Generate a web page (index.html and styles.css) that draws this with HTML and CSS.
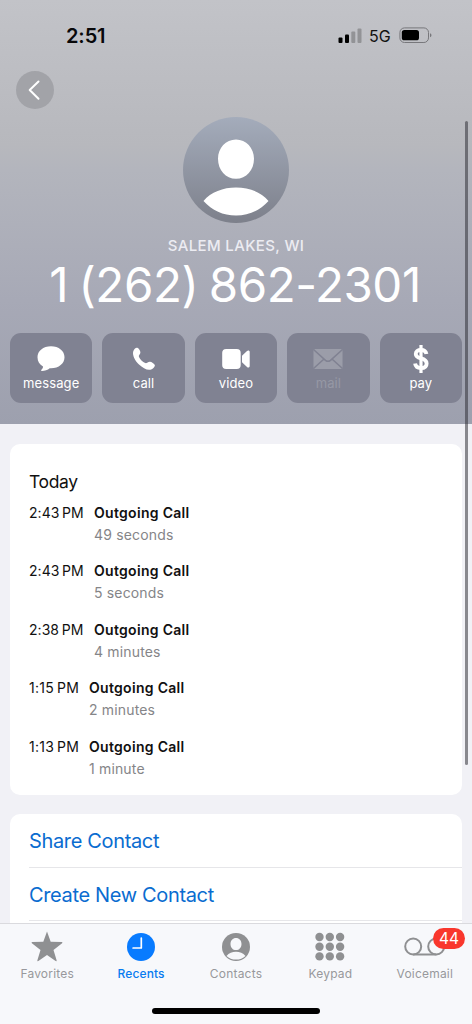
FILE: index.html
```html
<!DOCTYPE html>
<html lang="en">
<head>
<meta charset="utf-8">
<title>Recents</title>
<link rel="stylesheet" href="styles.css">
</head>
<body>
<div class="phone">
  <header class="hero">
    <div class="status">
      <span class="clock">2:51</span>
      <div class="indicators">
        <svg class="signal" width="24" height="16" viewBox="0 0 24 16"><rect x="0.5" y="9.5" width="4" height="5.5" rx="1"/><rect x="7" y="6.5" width="4" height="8.500" rx="1"/><g opacity=".23"><rect x="13.300" y="3.500" width="4" height="11.500" rx="1"/><rect x="19.500" y="0.500" width="4" height="14.500" rx="1"/></g></svg>
        <span class="network">5G</span>
        <svg class="battery" width="34" height="17" viewBox="0 0 34 17"><rect x=".9" y=".9" width="28.600" height="14.600" rx="4.600" fill="none" stroke="#77777b" stroke-width="1"/><rect x="2.800" y="2.900" width="17.200" height="10.400" rx="2.600"/><path d="M31 6.200c2 .8 2 3.300 0 4z" fill="#77777b"/></svg>
      </div>
    </div>
    <button class="back" aria-label="Back"><svg width="38" height="38" viewBox="0 0 38 38"><path d="M22.500 10.500 13.700 19l8.800 8.700" fill="none" stroke="#fff" stroke-width="2" stroke-linecap="round" stroke-linejoin="round"/></svg></button>
    <svg class="avatar" width="106" height="106" viewBox="0 0 106 106">
      <defs><linearGradient id="face" x2="0" y2="1"><stop stop-color="#a4acbb"/><stop offset="1" stop-color="#7d808b"/></linearGradient></defs>
      <circle cx="53" cy="53" r="53" fill="url(#face)"/>
      <path d="M53 22.500c10.200 0 18 8.500 18 19.200 0 11.300-7.700 20.100-18 20.100s-18-8.800-18-20.100c0-10.700 7.800-19.200 18-19.200zM20.500 84C28 75 40 70.500 53 70.500S78 75 85.500 84C77 93.500 66 98.500 53 98.500S29 93.500 20.500 84z" fill="#fff"/>
    </svg>
    <div class="place">SALEM LAKES, WI</div>
    <h1 class="number">1 (262) 862-2301</h1>
    <div class="actions">
      <button class="action"><svg width="32" height="28" viewBox="0 0 32 28"><path d="M16 1.200c7.800 0 13.500 4.700 13.500 11S23.800 23.200 16 23.200h-1.300c-2 1.700-5.500 2.900-7.900 2.800-.8 0-1-.7-.4-1.200 1-.8 1.700-2.100 1.600-3.300C4.600 19.500 2.500 16.300 2.500 12.200c0-6.300 5.700-11 13.500-11z"/></svg><span>message</span></button>
      <button class="action"><svg width="32" height="28" viewBox="0 0 32 28"><path d="M5.200 6.400C6.100 4 8.200 2.100 9.800 3.100c1.300.8 2.600 3.200 2.600 4.500 0 2-2.100 2.600-1.500 4.200.8 2.200 4 5.400 6.300 6.300 1.700.7 2.700-1.600 4.800-1.400 1.500.1 4.300 1.900 4.800 3.300.5 1.700-2 4.100-4.500 4.700-3.100.8-7.600-1.700-11.300-5.200C7 15.700 4.200 10 5.200 6.400z"/></svg><span>call</span></button>
      <button class="action"><svg width="32" height="28" viewBox="0 0 32 28"><rect x="2.200" y="4" width="18.500" height="20" rx="4"/><path d="m22 10.800 5-4.700c1.200-1 2.700-.5 2.700 1v13.800c0 1.500-1.500 2-2.700 1l-5-4.700z"/></svg><span>video</span></button>
      <button class="action off"><svg width="32" height="28" viewBox="0 0 32 28"><rect x="1.500" y="4" width="29" height="20" rx="1.500"/><path d="m1.500 4.500 12 10.800q2.500 2 5 0l12-10.800M1.500 23.500 12 14M30.500 23.500 20 14" fill="none" stroke="#808292" stroke-width="1.600"/></svg><span>mail</span></button>
      <button class="action"><svg width="32" height="28" viewBox="0 0 32 28"><path d="M21.400 9C20.900 6.300 19.100 5 16 5c-3.300 0-5.200 1.500-5.200 3.900 0 2.700 2 3.600 5.200 4.500 3.800 1 5.600 2.200 5.600 5 0 2.900-2.200 4.600-5.600 4.600-3.400 0-5.500-1.700-5.900-4.500" fill="none" stroke="#fff" stroke-width="3.900"/><path d="M16-.5v29" stroke="#fff" stroke-width="3.200"/></svg><span>pay</span></button>
    </div>
  </header>

  <main class="content">
    <section class="card log">
      <h2>Today</h2>
      <div class="call"><time>2:43&#8202;&#8202;PM</time><div class="detail"><b>Outgoing Call</b><span>49 seconds</span></div></div>
      <div class="call"><time>2:43&#8202;&#8202;PM</time><div class="detail"><b>Outgoing Call</b><span>5 seconds</span></div></div>
      <div class="call"><time>2:38&#8202;&#8202;PM</time><div class="detail"><b>Outgoing Call</b><span>4 minutes</span></div></div>
      <div class="call early"><time>1:15&#8202;&#8202;PM</time><div class="detail"><b>Outgoing Call</b><span>2 minutes</span></div></div>
      <div class="call early"><time>1:13&#8202;&#8202;PM</time><div class="detail"><b>Outgoing Call</b><span>1 minute</span></div></div>
    </section>
    <section class="card links">
      <a>Share Contact</a>
      <a>Create New Contact</a>
      <a></a>
    </section>
  </main>

  <nav class="tabs">
    <a class="tab"><svg width="40" height="32" viewBox="0 0 40 32"><path d="m20 1.500 3.700 10.200 11 .4c.7 0 .9.700.4 1.100l-8.600 6.900 3.100 10.100c.2.800-.4 1.200-1 .8L20 25l-8.600 6c-.6.400-1.200 0-1-.8l3.100-10.100-8.600-6.900c-.5-.4-.3-1.100.4-1.100l11-.4z"/></svg><span>Favorites</span></a>
    <a class="tab active"><svg width="40" height="32" viewBox="0 0 40 32"><circle cx="20" cy="17" r="14"/><path d="M20.300 8v10h-8.200" fill="none" stroke="#fff" stroke-width="1.700" stroke-linecap="round" stroke-linejoin="round"/></svg><span>Recents</span></a>
    <a class="tab"><svg width="40" height="32" viewBox="0 0 40 32"><circle cx="20" cy="17" r="14"/><path d="M20 8c3.200 0 5.500 2.600 5.500 5.900 0 3.400-2.300 6.200-5.500 6.200s-5.500-2.800-5.500-6.200C14.500 10.600 16.800 8 20 8zM10.500 26c2.400-3 5.800-4.200 9.500-4.200s7.100 1.200 9.500 4.200c-2.500 2.500-5.800 3.600-9.500 3.600S13 28.500 10.500 26z" fill="#f7f8fb"/></svg><span>Contacts</span></a>
    <a class="tab"><svg width="40" height="32" viewBox="0 0 40 32"><circle cx="9.500" cy="7" r="4.200"/><circle cx="19.800" cy="7" r="4.200"/><circle cx="30.100" cy="7" r="4.200"/><circle cx="9.500" cy="16.700" r="4.200"/><circle cx="19.800" cy="16.700" r="4.200"/><circle cx="30.100" cy="16.700" r="4.200"/><circle cx="9.500" cy="26.400" r="4.200"/><circle cx="19.800" cy="26.400" r="4.200"/><circle cx="30.100" cy="26.400" r="4.200"/></svg><span>Keypad</span></a>
    <a class="tab"><svg width="42" height="32" viewBox="0 0 42 32"><g fill="none" stroke="#8f9092" stroke-width="2"><circle cx="9.200" cy="16.500" r="8"/><circle cx="32.200" cy="16.500" r="8"/><path d="M9.200 24.500h23"/></g></svg><span>Voicemail</span><em class="badge">44</em></a>
  </nav>
  <div class="home"></div>
  <div class="scrollbar"></div>
</div>
</body>
</html>
```
FILE: styles.css
```css
* { box-sizing: border-box; }
body { margin: 0; font-family: Inter, "Liberation Sans", sans-serif; color: #111; }
button { border: 0; padding: 0; font: inherit; }
svg { display: block; flex: none; }
.phone { position: relative; width: 472px; height: 1024px; overflow: hidden; display: flex; flex-direction: column; background: #f1f1f6; }

.hero { flex: none; height: 424px; display: flex; flex-direction: column; align-items: center; background: linear-gradient(#c2c3c8 0, #b7b8bd 145px, #b3b5bd 170px, #a7a9b6 300px, #9da0ae 424px); }
.status { width: 100%; height: 71px; padding: 24px 39px 0 66px; display: flex; justify-content: space-between; align-items: flex-start; }
.clock { font-size: 20px; line-height: 24px; font-weight: 600; color: #08080a; letter-spacing: -.1px; }
.indicators { display: flex; align-items: center; height: 23px; }
.signal { margin-right: 7px; }
.network { font-size: 16px; width: 30px; color: #111; }
.back { align-self: flex-start; flex: none; width: 38px; height: 38px; margin-left: 16px; border-radius: 50%; background: #a2a3a8; }
.avatar { margin-top: 8px; }
.place { margin-top: 13px; height: 20px; line-height: 20px; font-size: 15px; font-weight: 500; letter-spacing: .36px; color: #ececf2; white-space: nowrap; }
.number { margin: 0 2px 0 0; height: 58px; line-height: 57px; font-size: 47.500px; font-weight: 400; letter-spacing: -.450px; word-spacing: -2.500px; color: #fff; white-space: nowrap; }
.actions { align-self: stretch; display: grid; grid-template-columns: repeat(5, 1fr); gap: 10px; margin-top: 19px; padding: 0 10px; }
.action { height: 70px; border-radius: 11px; display: flex; flex-direction: column; align-items: center; padding-top: 12px; background: #808292; color: #fff; font-size: 13px; letter-spacing: .1px; line-height: 17px; }
.action svg { fill: #fff; }
.action span { margin-top: 2px; }
.action.off { color: #9698a5; }
.action.off svg { fill: #9b9da9; }

.content { flex: 1; min-height: 0; overflow: hidden; padding: 20px 10px 0; display: flex; flex-direction: column; gap: 19px; }
.card { background: #fff; border-radius: 10px; flex: none; }
.log { height: 351px; padding: 26px 20px 0 19px; }
.log h2 { margin: 0 0 8.500px; font-size: 17.500px; line-height: 24px; font-weight: 400; letter-spacing: -.35px; }
.call { display: flex; height: 58.500px; font-size: 14px; line-height: 20px; }
.call time { width: 65px; white-space: nowrap; letter-spacing: .05px; }
.call.early time { width: 60px; letter-spacing: .25px; }
.detail { display: flex; flex-direction: column; gap: 2px; }
.detail b { font-weight: 600; letter-spacing: .3px; }
.detail span { color: #858588; letter-spacing: .16px; }
.links { padding-left: 19px; }
.links a { display: block; height: 53.500px; border-bottom: 1px solid #e6e6e9; line-height: 54px; font-size: 20px; letter-spacing: -.35px; color: #0a6cd0; }

.tabs { flex: none; height: 101px; border-top: 1px solid #dadade; background: #f7f8fb; display: grid; grid-template-columns: repeat(5, 1fr); }
.tab { position: relative; padding-top: 6px; display: flex; flex-direction: column; align-items: center; color: #98989c; font-size: 12px; font-weight: 400; line-height: 16px; letter-spacing: .2px; }
.tab svg { fill: #8f9092; }
.tab span { margin-top: 4px; }
.tab.active { color: #087bf0; font-weight: 500; padding-right: 1px; letter-spacing: .1px; }
.tab.active svg { fill: #087bff; }
.badge { position: absolute; left: 55.500px; top: 4px; width: 32px; height: 21px; border-radius: 11px; background: #f9372d; color: #fff; font-style: normal; font-weight: 400; font-size: 15.500px; line-height: 21px; text-align: center; }
.home { position: absolute; left: 152px; top: 1008px; width: 168px; height: 6px; border-radius: 3px; background: #000; }
.scrollbar { position: absolute; left: 465px; top: 121px; width: 3px; height: 644px; border-radius: 2px; background: rgba(50, 50, 57, .55); }
```
